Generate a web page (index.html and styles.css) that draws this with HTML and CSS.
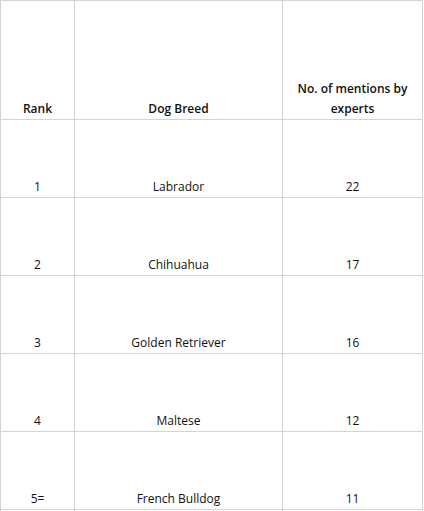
FILE: index.html
```html
<!DOCTYPE html>
<html>
<head>
<meta charset="utf-8">
<link rel="stylesheet" href="styles.css">
</head>
<body>
<div class="frame">
  <div class="sheet">
    <div class="cell head">Rank</div>
    <div class="cell head">Dog Breed</div>
    <div class="cell head">No. of mentions by experts</div>

    <div class="cell">1</div>
    <div class="cell">Labrador</div>
    <div class="cell">22</div>

    <div class="cell">2</div>
    <div class="cell">Chihuahua</div>
    <div class="cell">17</div>

    <div class="cell">3</div>
    <div class="cell">Golden Retriever</div>
    <div class="cell">16</div>

    <div class="cell">4</div>
    <div class="cell">Maltese</div>
    <div class="cell">12</div>

    <div class="cell">5=</div>
    <div class="cell">French Bulldog</div>
    <div class="cell">11</div>

    <div class="cell"></div>
    <div class="cell"></div>
    <div class="cell"></div>
  </div>
</div>
</body>
</html>
```
FILE: styles.css
```css
html, body {
  margin: 0;
  padding: 0;
  background: #ffffff;
}
body {
  font-family: "Open Sans", "Liberation Sans", sans-serif;
  font-size: 12px;
  color: #111111;
}
.frame {
  height: 511px;
  overflow: hidden;
}
.sheet {
  display: grid;
  grid-template-columns: 73px 207px 139px;
  grid-template-rows: 118px repeat(6, 77px);
  gap: 1px;
  padding: 1px;
  width: max-content;
  background: #d4d4d4;
}
.cell {
  background: #ffffff;
  display: flex;
  align-items: flex-end;
  justify-content: center;
  text-align: center;
  line-height: 20px;
}
.head {
  font-weight: 600;
  padding: 0 6px;
}
```
